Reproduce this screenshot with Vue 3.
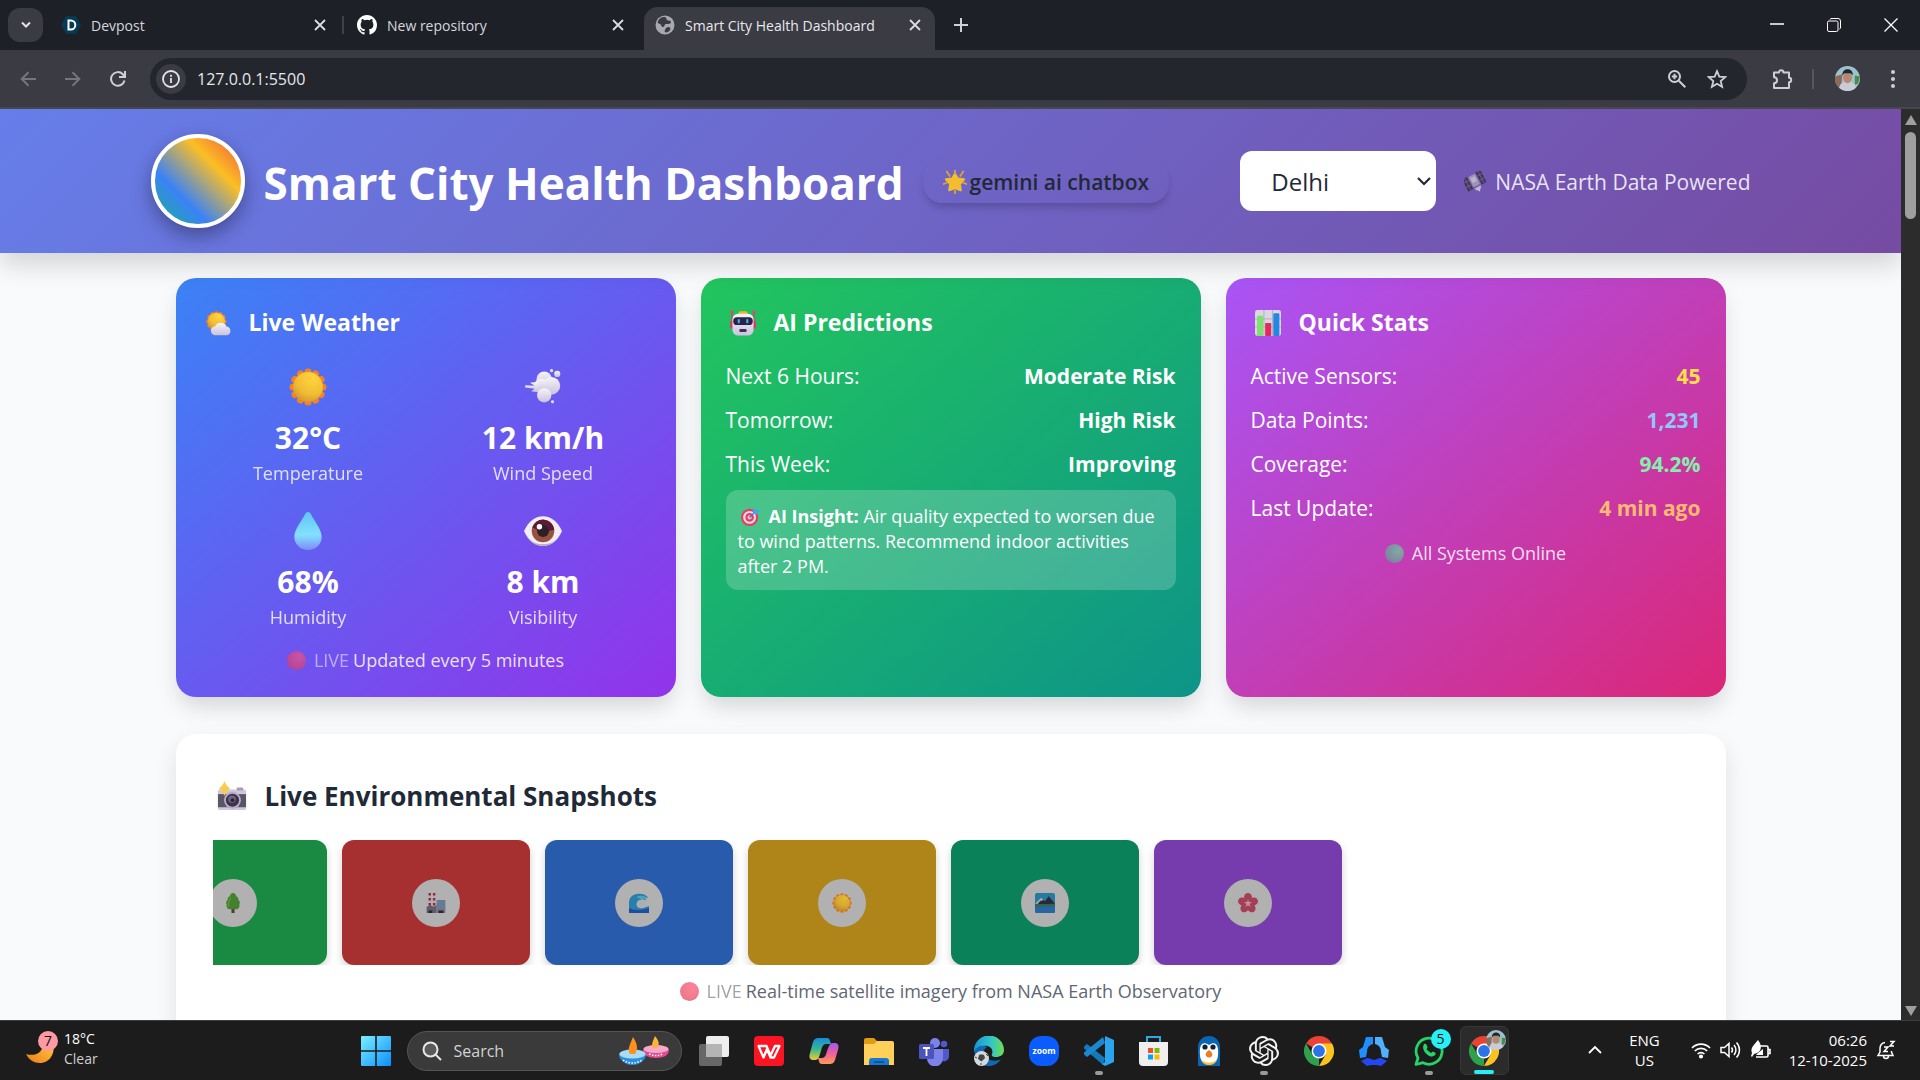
<template>
    <div class="screen">
        <!-- shared drawings -->
        <svg class="sprite" aria-hidden="true">
            <defs>
                <radialGradient id="gSun" cx=".65" cy=".2" r=".9">
                    <stop offset="0" stop-color="#ffd53d" /><stop offset=".6" stop-color="#f1bd34" /><stop offset="1" stop-color="#cf922c" />
                </radialGradient>
                <linearGradient id="gCloud" x1="0" y1="0" x2="0" y2="1">
                    <stop offset="0" stop-color="#f7f4f8" /><stop offset="1" stop-color="#c9c2dc" />
                </linearGradient>
                <linearGradient id="gDrop" x1="0" y1="0" x2="0" y2="1">
                    <stop offset="0" stop-color="#5fc4f5" /><stop offset=".6" stop-color="#83e0ff" /><stop offset="1" stop-color="#7c8cf8" />
                </linearGradient>
                <linearGradient id="gMoon" x1="1" y1="0" x2="0" y2="1">
                    <stop offset="0" stop-color="#ffcf3f" /><stop offset="1" stop-color="#ee7a1c" />
                </linearGradient>
                <linearGradient id="gWin" x1="0" y1="0" x2="1" y2="1">
                    <stop offset="0" stop-color="#7cefff" /><stop offset="1" stop-color="#0a8fff" />
                </linearGradient>
                <linearGradient id="gEdge" x1="0" y1="0" x2="1" y2="0">
                    <stop offset="0" stop-color="#1795d6" /><stop offset=".6" stop-color="#35c6c8" /><stop offset="1" stop-color="#6fe04a" />
                </linearGradient>
                <linearGradient id="gCopA" x1="0" y1="0" x2="0" y2="1">
                    <stop offset="0" stop-color="#1a8be0" /><stop offset=".5" stop-color="#35b98e" /><stop offset="1" stop-color="#f2c93a" />
                </linearGradient>
                <linearGradient id="gCopB" x1="0" y1="0" x2="0" y2="1">
                    <stop offset="0" stop-color="#a05bf0" /><stop offset=".5" stop-color="#ee5f9d" /><stop offset="1" stop-color="#ff9a52" />
                </linearGradient>
            </defs>
            <symbol id="sun" viewBox="0 0 32 32">
                <g fill="#f58220">
                    <circle v-for="a in 12" :key="a" cx="16" cy="3.4" r="3" :transform="`rotate(${a * 30} 16 16)`" />
                </g>
                <circle cx="16" cy="16" r="12.6" fill="url(#gSun)" />
            </symbol>
            <symbol id="suncloud" viewBox="0 0 32 32">
                <g fill="#f58220">
                    <circle v-for="a in 12" :key="a" cx="14" cy="4" r="2.6" :transform="`rotate(${a * 30} 14 14)`" />
                </g>
                <circle cx="14" cy="14" r="10.6" fill="url(#gSun)" />
                <path d="M13 31a5.5 5.5 0 0 1-.5-11 7.5 7.5 0 0 1 7-4.2 7.5 7.5 0 0 1 7 4.4A5.5 5.5 0 0 1 27 31z" fill="url(#gCloud)" />
            </symbol>
            <symbol id="wind" viewBox="0 0 32 32">
                <g fill="url(#gCloud)">
                    <circle cx="17" cy="9.5" r="6.5" /><circle cx="23" cy="15" r="7.5" /><circle cx="14.5" cy="15" r="6" /><circle cx="17" cy="23" r="6" />
                    <path d="M1 14.5 9 15l-4-2.500 7-1v9l-6-1 3-2-8-1z" />
                    <circle cx="28" cy="5" r="2.6" /><circle cx="23.2" cy="2.3" r="1.4" /><circle cx="24" cy="28.5" r="1.4" />
                </g>
            </symbol>
            <symbol id="drop" viewBox="0 0 32 32">
                <path d="M16 0c1 0 2 .7 2.5 1.8C21 7 27.5 14.5 27.5 21a11.5 11 0 0 1-23 0C4.5 14.5 11 7 13.5 1.8 14 .7 15 0 16 0z" fill="url(#gDrop)" />
            </symbol>
            <symbol id="eye" viewBox="0 0 32 32">
                <path d="M0 16C4 7 10 3.5 16 3.5S28 7 32 16C28 25 22 28.5 16 28.5S4 25 0 16z" fill="#f1eef3" />
                <path d="M1 18c4 7 9 9 15 9s11-2 15-9c-4 8-9 10.500-15 10.500S5 26 1 18z" fill="#b9b2c2" />
                <circle cx="16" cy="16" r="9.5" fill="#98513f" />
                <path d="M7 13a9.5 9.5 0 0 1 18.500 2L16 17z" fill="#5b1a35" />
                <circle cx="16" cy="16" r="5" fill="#2a2026" /><circle cx="13" cy="12.5" r="2.3" fill="#fff" />
            </symbol>
            <symbol id="robot" viewBox="0 0 32 32">
                <path d="M2.5 2v18M29.5 2v18" stroke="#dc3a63" stroke-width="1.6" />
                <circle cx="2.5" cy="2.5" r="2" fill="#f0416d" /><circle cx="29.5" cy="2.5" r="2" fill="#f0416d" />
                <rect x="0" y="13" width="6" height="10" rx="2.5" fill="#d93a68" /><rect x="26" y="13" width="6" height="10" rx="2.5" fill="#d93a68" />
                <rect x="10.5" y="1.5" width="11" height="5" rx="2" fill="#f4b32a" />
                <rect x="3" y="4.5" width="26" height="27" rx="7" fill="url(#gCloud)" />
                <rect x="4" y="9" width="24" height="9.5" rx="4.5" fill="#2b2248" />
                <rect x="9.5" y="11" width="2.6" height="5.5" rx="1.3" fill="#3cb4ff" /><rect x="20" y="11" width="2.6" height="5.5" rx="1.3" fill="#3cb4ff" />
                <rect x="11.5" y="23.5" width="9" height="3.6" rx="1.5" fill="#3b2c5c" />
            </symbol>
            <symbol id="chart" viewBox="0 0 32 32">
                <rect width="32" height="32" rx="3" fill="#dcd5e4" />
                <path d="M0 11h32M0 21h32M11 0v32M21.5 0v32" stroke="#b6abc6" stroke-width="1.2" />
                <rect x="2.5" y="7" width="7.5" height="25" rx="1" fill="#7ee36b" /><rect x="12.5" y="16" width="7.5" height="16" rx="1" fill="#e22a5b" /><rect x="22.5" y="4" width="7.5" height="28" rx="1" fill="#2289e0" />
            </symbol>
            <symbol id="target" viewBox="0 0 32 32">
                <circle cx="14.5" cy="17.5" r="14.5" fill="#e43e62" /><circle cx="14.5" cy="17.5" r="10.8" fill="#eedbe6" /><circle cx="14.5" cy="17.5" r="7.2" fill="#e43e62" /><circle cx="14.5" cy="17.5" r="3.6" fill="#d9c3d4" />
                <path d="m14.5 17.5 10-10" stroke="#3d6fb8" stroke-width="2" /><path d="m20 7 4-6 2 4 5 1-4 6-7-1z" fill="#42a5f0" />
            </symbol>
            <symbol id="camera" viewBox="0 0 32 32">
                <rect x="1" y="9" width="30" height="22" rx="2" fill="#cfc7dc" /><rect x="21" y="7" width="7" height="3" rx="1" fill="#a59db3" />
                <rect x="1" y="14" width="30" height="14" fill="#5c5566" />
                <circle cx="16.5" cy="20.5" r="9" fill="#b7adc6" /><circle cx="16.5" cy="20.5" r="7" fill="#3b3347" /><circle cx="16" cy="19.5" r="4" fill="#6f6580" /><circle cx="16.5" cy="20.5" r="2" fill="#2a2333" />
                <path d="M8 0c1.500 4 3 6 6 8-3 2-4.500 4-6 8-1.500-4-3-6-6-8 3-2 4.500-4 6-8z" fill="#fbcb4c" />
            </symbol>
            <symbol id="tree" viewBox="0 0 32 32">
                <rect x="13.5" y="22" width="5" height="10" rx="1" fill="#6b3f3b" />
                <path d="M16 0c3 0 5 3 5 5 3 1 4 4 3.500 6 3 2 3 5 1.500 7 1.500 4-1 8-5 8H11c-4 0-6.500-4-5-8-1.500-2-1.500-5 1.500-7C7 9 8 6 11 5c0-2 2-5 5-5z" fill="#4d9135" />
                <path d="M16 2c-3 2-4 4-3 8-3 3-4 6-3 13-3-1-3-3-2-6-1-2 0-4 2-5 0-3 1-5 3-6 0-2 1-4 3-4z" fill="#6eae3c" />
            </symbol>
            <symbol id="factory" viewBox="0 0 32 32">
                <rect x="4" y="0" width="4" height="21" fill="#c9c4cc" /><rect x="11" y="0" width="4" height="21" fill="#c9c4cc" />
                <path d="M4 0h4v4H4zm0 8h4v4H4zm0 8h4v4H4zM11 0h4v4h-4zm0 8h4v4h-4zm0 8h4v4h-4z" fill="#a82f52" />
                <path d="M1 22l6-3 5 3 5-3v13H1z" fill="#6f6878" /><rect x="17" y="11" width="14" height="21" rx="1" fill="#8a8296" />
                <path d="M19 14h4v3h-4zm6 0h4v3h-4zm-6 6h4v3h-4zm6 0h4v3h-4z" fill="#38a6d8" /><path d="M4 28h6v4H4zm16 0h8v4h-8z" fill="#2f2839" />
            </symbol>
            <symbol id="wave" viewBox="0 0 32 32">
                <path d="M0 32V14C1 5 8 1 17 1c7 0 12 3 14 7l-6-1 3 5-5-2c-7 0-11 4-11 8 0 6 7 8 13 5 3-1 5-2 7-2v11z" fill="#2d8fc4" />
                <path d="M0 32V24c6 2 10 4 17 3 6 0 10-2 15-3v8z" fill="#2557b5" />
                <path d="M12 6c6-3 13-2 17 2l-5 1 2 3-5-2c-4 0-6-2-9-4z" fill="#58b9d4" /><circle cx="19" cy="17" r="6" fill="#c3c6c9" />
            </symbol>
            <symbol id="landscape" viewBox="0 0 32 32">
                <rect width="32" height="32" rx="3" fill="#2a8cb4" /><path d="M0 19 10 7l6 6 6-8 10 12v5H0z" fill="#322c46" /><path d="M0 17 10 7l4 4-6 2-4 5z" fill="#bdbcc4" />
                <path d="M0 17c8 1 22 0 32 0v5H0z" fill="#35774d" /><path d="M0 21h32v8a3 3 0 0 1-3 3H3a3 3 0 0 1-3-3z" fill="#2d73b8" />
            </symbol>
            <symbol id="flower" viewBox="0 0 32 32">
                <g fill="#bb4862">
                    <ellipse v-for="a in 5" :key="a" cx="16" cy="7.5" rx="6.4" ry="7.5" :transform="`rotate(${a * 72} 16 16.5)`" />
                </g>
                <path d="m16 10 1.5 4.500h5l-4 3 1.500 5-4-3-4 3 1.500-5-4-3h5z" fill="#d5a9b4" />
            </symbol>
            <symbol id="glow" viewBox="0 0 32 32">
                <path d="M16 5l3.6 6.500 8.400 1-5.600 6.300 1.200 8L16 24l-7.600 2.800 1.200-8L4 12.500l8.400-1z" fill="#f2bd2f" stroke="#f2bd2f" stroke-width="3" stroke-linejoin="round" />
                <path d="M16 0v5M5 2l4 6M27 2l-4 6M0 19l5-2M32 19l-5-2M16 32v-5" stroke="#dba62f" stroke-width="2.4" stroke-linecap="round" />
            </symbol>
            <symbol id="satellite" viewBox="0 0 32 32">
                <g transform="rotate(-28 16 16)">
                    <rect x="1" y="4" width="8" height="20" fill="#41375a" /><rect x="23" y="4" width="8" height="20" fill="#41375a" />
                    <path d="M1 10h8M1 17h8M23 10h8M23 17h8M5 4v20M27 4v20" stroke="#7b6d95" />
                    <rect x="10.5" y="5" width="11" height="17" rx="2" fill="#9d93ae" /><rect x="12.5" y="8" width="7" height="8" fill="#bcb3c9" />
                    <path d="M11 24a5 5 0 0 0 10 0z" fill="#b9aecb" /><path d="M16 26v5" stroke="#cfc5dc" stroke-width="2" />
                </g>
            </symbol>
            <symbol id="face" viewBox="0 0 24 24">
                <circle cx="12" cy="12" r="12" fill="#9cc3cc" /><path d="M0 10a12 12 0 0 0 6 12l1-14z" fill="#8d6a5e" /><path d="M24 10l-5-1v9l3-1z" fill="#4a8a4c" />
                <path d="M4 21c1-5 4-6 8-6s7 1 8 6a12 12 0 0 1-16 0z" fill="#c9ccd4" /><ellipse cx="12" cy="11" rx="4.2" ry="5.5" fill="#b98670" /><path d="M7 9c0-5 3-6 5-6s5.500 1 5 6l-2-2H9z" fill="#1f2733" />
            </symbol>
            <symbol id="chrome" viewBox="0 0 32 32">
                <path d="M16 16 2.14 8A16 16 0 0 1 29.86 8z" fill="#e94335" /><path d="M2.14 8l7 12 6.900 4L16 32A16 16 0 0 1 2.14 8z" fill="#2da14c" />
                <path d="M16 8h13.86A16 16 0 0 1 16 32l7-12z" fill="#fcc31e" /><circle cx="16" cy="16" r="8" fill="#fff" /><circle cx="16" cy="16" r="6.3" fill="#2b73e8" />
            </symbol>
        </svg>

        <div class="tabstrip">
            <button class="tab-search" aria-label="Search tabs">
                <svg width="12" height="8" viewBox="0 0 12 8"><path d="m2 1.500 4 4 4-4" fill="none" stroke="#e3e4e8" stroke-width="2" /></svg>
            </button>
            <div v-for="tab in tabs" :key="tab.name" class="tab" :class="{ active: tab.active, first: tab.icon === 'devpost' }">
                <svg v-if="tab.icon === 'devpost'" class="favicon" viewBox="0 0 20 20">
                    <path d="M5 1h10l5 9-5 9H5l-5-9z" fill="#053a52" /><path d="M7.500 5.500h2.300a4.500 4.500 0 0 1 0 9H7.500z" fill="none" stroke="#fff" stroke-width="2" />
                </svg>
                <svg v-else-if="tab.icon === 'github'" class="favicon" viewBox="0 0 16 16">
                    <path fill="#fff" d="M8 0C3.580 0 0 3.580 0 8c0 3.540 2.290 6.530 5.470 7.590.4.070.55-.17.55-.38 0-.19-.01-.82-.01-1.490-2.010.37-2.530-.49-2.690-.94-.09-.23-.48-.94-.82-1.130-.28-.15-.68-.52-.01-.53.63-.01 1.080.58 1.230.82.72 1.210 1.870.87 2.330.66.070-.52.28-.87.51-1.070-1.780-.2-3.640-.89-3.640-3.950 0-.87.31-1.590.82-2.150-.08-.2-.36-1.020.08-2.120 0 0 .67-.21 2.200.82a7.600 7.600 0 0 1 4 0c1.530-1.040 2.200-.82 2.200-.82.44 1.100.16 1.920.08 2.120.51.56.82 1.270.82 2.150 0 3.070-1.870 3.750-3.650 3.950.29.25.54.73.54 1.480 0 1.070-.01 1.930-.01 2.200 0 .21.15.46.55.38A8 8 0 0 0 16 8c0-4.420-3.580-8-8-8z" />
                </svg>
                <svg v-else class="favicon" viewBox="0 0 20 20">
                    <circle cx="10" cy="10" r="9.5" fill="#a6a9b1" /><path d="M9 2c3 0 2 2 3 3s4 0 4 2-3 2-5 2-1 3-3 3-1-2-3-3-3-1-2-3 3-4 6-4zM13 12c2 0 3 1 2 3s-4 3-5 2 1-5 3-5z" fill="#3a3b43" />
                </svg>
                <span class="tab-name">{{ tab.name }}</span>
                <button class="tab-close" :aria-label="'Close ' + tab.name">
                    <svg width="12" height="12" viewBox="0 0 12 12"><path d="m1 1 10 10M11 1 1 11" stroke="#dcdde2" stroke-width="1.8" /></svg>
                </button>
            </div>
            <button class="tab-new" aria-label="New tab">
                <svg width="14" height="14" viewBox="0 0 14 14"><path d="M7 0v14M0 7h14" stroke="#cfd1d8" stroke-width="2" /></svg>
            </button>
            <div class="window-controls">
                <button aria-label="Minimize"><svg width="14" height="14" viewBox="0 0 14 14"><path d="M0 6h14" stroke="#fff" stroke-width="1.5" /></svg></button>
                <button aria-label="Restore"><svg width="14" height="14" viewBox="0 0 14 14" fill="none" stroke="#fff"><rect x=".5" y="3" width="10.5" height="10.5" rx="1.5" /><path d="M3 1.500A1.500 1.500 0 0 1 4 .5h7a2.500 2.500 0 0 1 2.500 2.500v7a1.500 1.500 0 0 1-1 1" /></svg></button>
                <button aria-label="Close"><svg width="14" height="14" viewBox="0 0 14 14"><path d="m.5.5 13 13m0-13-13 13" stroke="#fff" stroke-width="1.3" /></svg></button>
            </div>
        </div>

        <div class="toolbar">
            <button class="tool" aria-label="Back"><svg width="16" height="16" viewBox="0 0 16 16" fill="none" stroke="#74767e" stroke-width="2"><path d="M16 8H2M8.500 1.200 1.700 8l6.800 6.800" /></svg></button>
            <button class="tool" aria-label="Forward"><svg width="16" height="16" viewBox="0 0 16 16" fill="none" stroke="#74767e" stroke-width="2"><path d="M0 8h14M7.500 1.200 14.300 8l-6.800 6.800" /></svg></button>
            <button class="tool" aria-label="Reload"><svg width="16" height="16" viewBox="0 0 16 16" fill="none" stroke="#cdcfd6" stroke-width="2"><path d="M14.500 9.500A6.800 6.800 0 1 1 12.800 3.200L15 5.500M15 0v6H9" /></svg></button>
            <div class="omnibox">
                <button class="site-info" aria-label="Site information"><svg width="18" height="18" viewBox="0 0 18 18"><circle cx="9" cy="9" r="8" fill="none" stroke="#e3e4e8" stroke-width="1.8" /><path d="M9 8v5M9 4.700v2" stroke="#e3e4e8" stroke-width="1.8" /></svg></button>
                <input class="url" type="text" aria-label="Address" v-model="url" />
                <button class="tool small" aria-label="Zoom"><svg width="20" height="20" viewBox="0 0 20 20" fill="none" stroke="#cdcfd6" stroke-width="2"><circle cx="7.5" cy="7.5" r="5.5" /><path d="m11.800 11.800 6.500 6.500M7.500 4.800v5.400M4.800 7.500h5.400" /></svg></button>
                <button class="tool small" aria-label="Bookmark"><svg width="20" height="20" viewBox="0 0 20 20" fill="none" stroke="#cdcfd6" stroke-width="1.8"><path d="m10 2.200 2.300 5.400 5.900.5-4.500 3.900 1.400 5.800-5.100-3.100-5.100 3.100L6.300 12 1.800 8.100l5.900-.5z" /></svg></button>
            </div>
            <button class="tool" aria-label="Extensions"><svg width="22" height="22" viewBox="0 0 22 22" fill="none" stroke="#cdcfd6" stroke-width="2"><path d="M3 4.500h5a2.200 2.200 0 0 1 4.400 0H18v5.300a2.200 2.200 0 0 1 0 4.400V20H3v-4.800a3 3 0 0 0 0-6z" stroke-linejoin="round" /></svg></button>
            <span class="divider"></span>
            <button class="tool profile" aria-label="Profile"><svg width="25" height="25"><use href="#face" /></svg></button>
            <button class="tool menu" aria-label="Menu"><svg width="4" height="18" viewBox="0 0 4 18" fill="#cdcfd6"><circle cx="2" cy="2" r="2" /><circle cx="2" cy="9" r="2" /><circle cx="2" cy="16" r="2" /></svg></button>
        </div>

        <div class="viewport">
            <div class="page">
                <header class="header">
                    <div class="header-inner">
                        <div class="logo"></div>
                        <h1>Smart City Health Dashboard</h1>
                        <button class="chat-button"><svg width="24" height="24"><use href="#glow" /></svg>gemini ai chatbox</button>
                        <div class="header-right">
                            <div class="city-box">
                                <select v-model="city" class="city" aria-label="City">
                                    <option v-for="c in cities" :key="c">{{ c }}</option>
                                </select>
                                <svg class="city-arrow" width="14" height="10" viewBox="0 0 14 10"><path d="m1 2 6 6 6-6" fill="none" stroke="#1f2937" stroke-width="2.2" /></svg>
                            </div>
                            <span class="powered"><svg width="22" height="22"><use href="#satellite" /></svg>NASA Earth Data Powered</span>
                        </div>
                    </div>
                </header>

                <main class="main">
                    <div class="cards">
                        <section class="card weather">
                            <h2><svg width="26" height="26"><use href="#suncloud" /></svg>Live Weather</h2>
                            <div class="weather-grid">
                                <div v-for="w in weather" :key="w.label" class="weather-item">
                                    <div class="weather-icon"><svg width="38" height="38"><use :href="'#' + w.icon" /></svg></div>
                                    <div class="weather-value">{{ w.value }}</div>
                                    <div class="weather-label">{{ w.label }}</div>
                                </div>
                            </div>
                            <p class="note live"><i class="dot red"></i><span class="pulse">LIVE</span> Updated every 5 minutes</p>
                        </section>

                        <section class="card predictions">
                            <h2><svg width="26" height="26"><use href="#robot" /></svg>AI Predictions</h2>
                            <div class="rows">
                                <div v-for="p in predictions" :key="p.label" class="row"><span>{{ p.label }}</span><strong>{{ p.value }}</strong></div>
                            </div>
                            <p class="insight"><svg width="19" height="19"><use href="#target" /></svg><strong>AI Insight:</strong> Air quality expected to worsen due to wind patterns. Recommend indoor activities after 2 PM.</p>
                        </section>

                        <section class="card stats">
                            <h2><svg width="26" height="26"><use href="#chart" /></svg>Quick Stats</h2>
                            <div class="rows">
                                <div v-for="s in stats" :key="s.label" class="row"><span>{{ s.label }}</span><strong :class="s.color">{{ s.value }}</strong></div>
                            </div>
                            <p class="note online"><i class="dot green"></i>All Systems Online</p>
                        </section>
                    </div>

                    <section class="snapshots">
                        <h2><svg width="30" height="30"><use href="#camera" /></svg>Live Environmental Snapshots</h2>
                        <div class="strip">
                            <div class="track">
                                <div v-for="s in snapshots" :key="s.icon" class="snap" :class="s.color">
                                    <span class="badge"><svg width="20" height="20"><use :href="'#' + s.icon" /></svg></span>
                                </div>
                            </div>
                        </div>
                        <p class="note caption"><i class="dot pink"></i><span class="pulse">LIVE</span> Real-time satellite imagery from NASA Earth Observatory</p>
                    </section>
                </main>
            </div>
            <div class="scrollbar">
                <svg width="12" height="10" viewBox="0 0 12 10"><path d="M6 0 12 10H0z" fill="#9f9f9f" /></svg>
                <div class="thumb"></div>
                <svg width="12" height="10" viewBox="0 0 12 10"><path d="M6 10 12 0H0z" fill="#9f9f9f" /></svg>
            </div>
        </div>

        <footer class="taskbar">
            <div class="widget">
                <svg width="36" height="38" viewBox="0 0 36 38">
                    <path d="M27 11c3 12-3 22-13 22-6 0-11-3-14-9 10 3 18-2 17-12z" fill="url(#gMoon)" /><circle cx="22" cy="11" r="10" fill="#ff99a4" />
                    <text x="22" y="16" text-anchor="middle" font-size="14" fill="#111">7</text>
                </svg>
                <div>18°C<br /><span class="dim">Clear</span></div>
            </div>
            <div class="apps">
                <button class="start" aria-label="Start"><svg width="30" height="30" viewBox="0 0 30 30"><path d="M1 0h13.200v14.200H0V1a1 1 0 0 1 1-1zM15.800 0H29a1 1 0 0 1 1 1v13.200H15.800zM0 15.800h14.200V30H1a1 1 0 0 1-1-1zM15.800 15.800H30V29a1 1 0 0 1-1 1H15.800z" fill="url(#gWin)" /></svg></button>
                <label class="search">
                    <svg width="20" height="20" viewBox="0 0 20 20" fill="none" stroke="#e8e8e8" stroke-width="2"><circle cx="8.5" cy="8.5" r="7" fill="#5a5a5a" /><path d="m13.500 13.500 5.500 5.500" /></svg>
                    <input type="text" placeholder="Search" aria-label="Search" />
                    <svg width="50" height="30" viewBox="0 0 50 30">
                        <path d="M24 14c0 5 5 8 13 8s13-3 13-8l-2-2H26z" fill="#e34a93" /><ellipse cx="37" cy="13" rx="12.5" ry="4" fill="#f7a9c7" /><path d="M36 0c4 5 5 8 2 12h-4c-2-4 0-7 2-12z" fill="#ffb13c" />
                        <path d="M0 18c0 6 6 11 13.500 11S27 24 27 18l-2-2H2z" fill="#2b8fdc" /><ellipse cx="13.5" cy="18" rx="13" ry="4.5" fill="#a8dcf2" /><path d="M14 1c5 8 5 12 2 17h-5c-3-5 0-9 3-17z" fill="#ff8f1f" />
                        <path d="M4 24c6 4 13 4 19 0M30 18c5 2 9 2 14 0" fill="none" stroke="#fff" stroke-width="1.5" stroke-dasharray="1.5 1.5" />
                    </svg>
                </label>
                <button v-for="app in apps" :key="app.id" class="app" :class="{ current: app.current }" :aria-label="app.id">
                    <svg v-if="app.id === 'Task view'" class="app-icon" viewBox="0 0 30 30"><rect x="7" width="23" height="21" rx="2" fill="#eee" /><rect y="8" width="23" height="22" rx="2" fill="#7a7a7a" opacity=".8" /><path d="M7 8h16v13H7z" fill="#b5b5b5" /></svg>
                    <svg v-else-if="app.id === 'WPS'" class="app-icon" viewBox="0 0 30 30"><rect width="30" height="30" rx="4" fill="#fb1422" /><path d="M4.500 10h8l4 9.500L21 10h4.500l-5.500 11.500h-3.500L13 13l-3.500 8.500z" fill="none" stroke="#fff" stroke-width="2.3" stroke-linejoin="round" /></svg>
                    <svg v-else-if="app.id === 'Copilot'" class="app-icon" viewBox="0 0 30 30"><path d="M9 2h9c3 0 3 3 4 6h-5c-3 0-4 3-5 7l-2 6c-1 2-2 3-4 3H4c-4 0-4-4-3-7L4 6c1-3 3-4 5-4z" fill="url(#gCopA)" /><path d="M21 28h-8c-3 0-3-3-4-6h4c3 0 4-3 5-7l2-5c1-2 2-3 4-3h2c4 0 4 4 3 7l-3 10c-1 3-3 4-5 4z" fill="url(#gCopB)" /></svg>
                    <svg v-else-if="app.id === 'Explorer'" class="app-icon" viewBox="0 0 30 30"><path d="M0 4a2 2 0 0 1 2-2h8l3 3h15v8H0z" fill="#e19b16" /><path d="M0 8h10l3-3h15a2 2 0 0 1 2 2v22H0z" fill="#ffd05a" /><path d="M5 29v-4a3 3 0 0 1 3-3h14a3 3 0 0 1 3 3v4z" fill="#1479cf" /><path d="M10 26h10" stroke="#0a4a88" stroke-width="1.5" /></svg>
                    <svg v-else-if="app.id === 'Teams'" class="app-icon" viewBox="0 0 30 30"><circle cx="16" cy="7" r="5" fill="#7b83eb" /><circle cx="25" cy="8" r="3.3" fill="#5059c9" /><path d="M22 13h8v8a5 5 0 0 1-7 4z" fill="#5059c9" /><path d="M8 13h16v9a8 8 0 0 1-16 1z" fill="#7b83eb" /><rect y="8" width="15" height="15" rx="1.5" fill="#4b53bc" /><path d="M4 12h7M7.500 12v8" stroke="#fff" stroke-width="1.8" /></svg>
                    <svg v-else-if="app.id === 'Edge'" class="app-icon" viewBox="0 0 30 30"><path d="M0 15a15 15 0 0 1 30-1c0 5-4 7-8 7-3 0-5-1-4-3 2-5-3-9-8-8-5 0-9 3-10 7z" fill="url(#gEdge)" /><path d="M1 14c4-5 9-5 12-3-5 3-5 11 3 13 4 1 8 1 11-1-4 7-13 9-20 5C2 25 0 20 1 14z" fill="#1068b0" /><circle cx="7.5" cy="22.5" r="7.5" fill="#d5d8dc" /><path d="M5.500 19h4l1 3-3 3-3-2zM1 21l2 1M12 18l2 2M7 27v2" stroke="#444" fill="#444" /></svg>
                    <svg v-else-if="app.id === 'Zoom'" class="app-icon" viewBox="0 0 30 30"><rect width="30" height="30" rx="12" fill="#0b5cff" /><text x="15" y="17.5" text-anchor="middle" font-size="8.5" font-weight="700" fill="#fff">zoom</text></svg>
                    <svg v-else-if="app.id === 'VS Code'" class="app-icon" viewBox="0 0 30 30"><path d="M21 22 3 8 0 10.500v2L19 29z" fill="#1279bd" /><path d="M21 7 3 21 0 18.500v-2L19 1z" fill="#1a87cf" /><path d="M21 0 30 4v22l-9 4-3-2 3-2z" fill="#2ba4f0" /></svg>
                    <svg v-else-if="app.id === 'Store'" class="app-icon" viewBox="0 0 30 30"><path d="M8 7V1h13v6" fill="none" stroke="#2fa8e0" stroke-width="2" /><path d="M0 6h29v20a4 4 0 0 1-4 4H4a4 4 0 0 1-4-4z" fill="#efefef" /><path d="M9 12h5v5H9z" fill="#f25022" /><path d="M15.500 12h5v5h-5z" fill="#7fba00" /><path d="M9 18.500h5v5H9z" fill="#00a4ef" /><path d="M15.500 18.500h5v5h-5z" fill="#ffb900" /></svg>
                    <svg v-else-if="app.id === 'Penguin'" class="app-icon" viewBox="0 0 30 30"><path d="M4 30V11a11 11 0 0 1 22 0v19z" fill="#0a66b2" /><path d="M6 19C5 8 9 5 15 9c6-4 10-1 9 10 0 12-18 12-18 0z" fill="#fff" /><path d="M7 23c3 5 13 5 16 0-1 8-15 8-16 0z" fill="#fbc02d" /><circle cx="11" cy="11" r="2.6" fill="#16202e" /><circle cx="19" cy="11" r="2.6" fill="#16202e" /><path d="M15 14c3 2 4 4 3 6-2 2-4 2-6 0-1-2 0-4 3-6z" fill="#ef7d1d" /></svg>
                    <svg v-else-if="app.id === 'ChatGPT'" class="app-icon" viewBox="0 0 24 24"><path fill="#f2f2f2" d="M22.2819 9.8211a5.9847 5.9847 0 0 0-.5157-4.9108 6.0462 6.0462 0 0 0-6.5098-2.9A6.0651 6.0651 0 0 0 4.9807 4.1818a5.9847 5.9847 0 0 0-3.9977 2.9 6.0462 6.0462 0 0 0 .7427 7.0966 5.98 5.98 0 0 0 .511 4.9107 6.051 6.051 0 0 0 6.5146 2.9001A5.9847 5.9847 0 0 0 13.2599 24a6.0557 6.0557 0 0 0 5.7718-4.2058 5.9894 5.9894 0 0 0 3.9977-2.9001 6.0557 6.0557 0 0 0-.7475-7.0729zm-9.022 12.6081a4.4755 4.4755 0 0 1-2.8764-1.0408l.1419-.0804 4.7783-2.7582a.7948.7948 0 0 0 .3927-.6813v-6.7369l2.02 1.1686a.071.071 0 0 1 .038.052v5.5826a4.504 4.504 0 0 1-4.4945 4.4944zm-9.6607-4.1254a4.4708 4.4708 0 0 1-.5346-3.0137l.142.0852 4.783 2.7582a.7712.7712 0 0 0 .7806 0l5.8428-3.3685v2.3324a.0804.0804 0 0 1-.0332.0615L9.74 19.9502a4.4992 4.4992 0 0 1-6.1408-1.6464zM2.3408 7.8956a4.485 4.485 0 0 1 2.3655-1.9728V11.6a.7664.7664 0 0 0 .3879.6765l5.8144 3.3543-2.0201 1.1685a.0757.0757 0 0 1-.071 0l-4.8303-2.7865A4.504 4.504 0 0 1 2.3408 7.872zm16.5963 3.8558L13.1038 8.364 15.1192 7.2a.0757.0757 0 0 1 .071 0l4.8303 2.7913a4.4944 4.4944 0 0 1-.6765 8.1042v-5.6772a.79.79 0 0 0-.407-.667zm2.0107-3.0231l-.142-.0852-4.7735-2.7818a.7759.7759 0 0 0-.7854 0L9.409 9.2297V6.8974a.0662.0662 0 0 1 .0284-.0615l4.8303-2.7866a4.4992 4.4992 0 0 1 6.6802 4.66zM8.3065 12.863l-2.02-1.1638a.0804.0804 0 0 1-.038-.0567V6.0742a4.4992 4.4992 0 0 1 7.3757-3.4537l-.142.0805L8.704 5.459a.7948.7948 0 0 0-.3927.6813zm1.0976-2.3654l2.602-1.4998 2.6069 1.4998v2.9994l-2.5974 1.4997-2.6067-1.4997Z" /></svg>
                    <svg v-else-if="app.id === 'Chrome'" class="app-icon"><use href="#chrome" /></svg>
                    <svg v-else-if="app.id === 'Hub'" class="app-icon" viewBox="0 0 30 30"><path d="M7 1h7v7a7.500 7.500 0 0 0-6 8l-1 5-6 1-1-8 4-3z" fill="#1f8fff" /><path d="M23 1h-7v7a7.500 7.500 0 0 1 6 8l1 5 6 1 1-8-4-3z" fill="#4fb0ff" /><path d="m2 25 6-3 3 .5a7 7 0 0 0 8 0l3-.5 6 3-6 5-4-1h-6l-4 1z" fill="#2447f5" /></svg>
                    <svg v-else-if="app.id === 'WhatsApp'" class="app-icon" viewBox="0 0 30 30"><path d="M2 28.500 4 22A13 13 0 1 1 9 26.700z" fill="none" stroke="#25d366" stroke-width="2.8" stroke-linejoin="round" /><path d="M10 8c2-1 3 1 3.500 3.500-1.500 2-1 2 3.500 5.500 2-1.500 2-2 4.500 0 1 2-3 4-5 3.500C12 19 7 13 10 8z" fill="#25d366" /></svg>
                    <svg v-else class="app-icon"><use href="#chrome" /></svg>
                    <span v-if="app.count" class="count">{{ app.count }}</span>
                    <svg v-if="app.current" class="app-face" width="20" height="20"><use href="#face" /></svg>
                    <i v-if="app.running" class="running"></i>
                </button>
            </div>
            <div class="tray">
                <svg width="14" height="9" viewBox="0 0 14 9"><path d="m1 8 6-6 6 6" fill="none" stroke="#fff" stroke-width="1.8" /></svg>
                <div class="lang">ENG<br />US</div>
                <div class="status">
                    <svg width="20" height="18" viewBox="0 0 20 18" fill="none" stroke="#fff" stroke-width="1.6"><path d="M1 7a12.500 12.500 0 0 1 18 0M3.800 10a8.700 8.700 0 0 1 12.400 0M6.600 13a4.800 4.800 0 0 1 6.800 0" /><circle cx="10" cy="15.5" r="1.3" fill="#fff" /></svg>
                    <svg width="21" height="18" viewBox="0 0 21 18" fill="none" stroke="#fff" stroke-width="1.5"><path d="M1 6.500h3.500L9 2.500v13l-4.500-4H1zM11.500 6.500a4 4 0 0 1 0 5M14 4a7.500 7.500 0 0 1 0 10M16.500 1.500a11 11 0 0 1 0 15" /></svg>
                    <svg width="21" height="20" viewBox="0 0 21 20"><path d="M9 6h7.500a1.500 1.500 0 0 1 1.500 1.500v8a1.500 1.500 0 0 1-1.500 1.500H6M18.500 9.500h1.500v4h-1.500" fill="none" stroke="#fff" stroke-width="1.6" /><path d="M8 0c4 5 4 11-1 13l-3 1-2 3-1-1 1-3C0 8 4 5 8 0zM8 13l5-4v6H6z" fill="#fff" /></svg>
                </div>
                <div class="clock">06:26<br />12-10-2025</div>
                <svg width="20" height="20" viewBox="0 0 20 20" fill="none" stroke="#fff" stroke-width="1.5"><path d="M9 2.500c-3 .5-5 3-5 6V12l-2 3.500h15L15.500 12v-1M7.500 16a2.500 2.500 0 0 0 5 0M8 7h4l-4 4.500h4M14 1.500h4l-4 4.500h4" /></svg>
            </div>
        </footer>
    </div>
</template>

<script setup>

import { ref } from 'vue';

const url = ref('127.0.0.1:5500');
const city = ref('Delhi');
const cities = ['Delhi'];

const tabs = [
    { name: 'Devpost', icon: 'devpost' },
    { name: 'New repository', icon: 'github' },
    { name: 'Smart City Health Dashboard', icon: 'globe', active: true },
];

const weather = [
    { icon: 'sun', value: '32°C', label: 'Temperature' },
    { icon: 'wind', value: '12 km/h', label: 'Wind Speed' },
    { icon: 'drop', value: '68%', label: 'Humidity' },
    { icon: 'eye', value: '8 km', label: 'Visibility' },
];

const predictions = [
    { label: 'Next 6 Hours:', value: 'Moderate Risk' },
    { label: 'Tomorrow:', value: 'High Risk' },
    { label: 'This Week:', value: 'Improving' },
];

const stats = [
    { label: 'Active Sensors:', value: '45', color: 'yellow' },
    { label: 'Data Points:', value: '1,231', color: 'blue' },
    { label: 'Coverage:', value: '94.2%', color: 'mint' },
    { label: 'Last Update:', value: '4 min ago', color: 'orange' },
];

const snapshots = [
    { icon: 'tree', color: 'forest' },
    { icon: 'factory', color: 'industry' },
    { icon: 'wave', color: 'ocean' },
    { icon: 'sun', color: 'desert' },
    { icon: 'landscape', color: 'park' },
    { icon: 'flower', color: 'garden' },
];

const apps = [
    { id: 'Task view' },
    { id: 'WPS' },
    { id: 'Copilot' },
    { id: 'Explorer' },
    { id: 'Teams' },
    { id: 'Edge' },
    { id: 'Zoom' },
    { id: 'VS Code', running: true },
    { id: 'Store' },
    { id: 'Penguin' },
    { id: 'ChatGPT', running: true },
    { id: 'Chrome' },
    { id: 'Hub' },
    { id: 'WhatsApp', running: true, count: 5 },
    { id: 'Chrome profile', running: true, current: true },
];
</script>

<style>
body {
    margin: 0;
    background: #1c1c1c;
}
</style>

<style scoped>
* {
    box-sizing: border-box;
}

.screen {
    display: flex;
    flex-direction: column;
    height: 100vh;
    overflow: hidden;
    font-family: "Segoe UI", "Open Sans", "Noto Sans", sans-serif;
    font-size: 18px;
}

.sprite {
    position: absolute;
    width: 0;
    height: 0;
}

button {
    display: flex;
    align-items: center;
    justify-content: center;
    padding: 0;
    border: none;
    background: none;
    font: inherit;
    cursor: pointer;
}

svg {
    flex: none;
}

h1,
h2,
p {
    margin: 0;
}

/* browser tabs */
.tabstrip {
    display: flex;
    align-items: center;
    height: 50px;
    flex: none;
    padding-left: 8px;
    background: #1d2027;
    color: #d5d7dd;
    font-size: 14px;
}

.tab-search {
    width: 35px;
    height: 34px;
    border-radius: 12px;
    background: #3a3b43;
}

.tab {
    display: flex;
    align-items: center;
    gap: 10px;
    width: 300px;
    height: 43px;
    margin-top: 7px;
    padding: 0 20px 7px 13px;
}

.tab.first {
    width: 301px;
    padding-left: 18px;
    padding-right: 18px;
    background: linear-gradient(#3f4149, #3f4149) right 0 top 9px / 2px 18px no-repeat;
}

.tab.active {
    width: 291px;
    padding-left: 11px;
    padding-right: 14px;
    border-radius: 14px 14px 0 0;
    background: #3a3b43;
    color: #e8e9ed;
}

.favicon {
    width: 20px;
    height: 20px;
}

.tab-name {
    flex: 1;
    white-space: nowrap;
}

.tab-new {
    width: 52px;
    height: 40px;
}

.window-controls {
    display: flex;
    margin-left: auto;
    padding-right: 1px;
}

.window-controls button {
    width: 57px;
    height: 50px;
}

.toolbar {
    display: flex;
    align-items: center;
    height: 59px;
    flex: none;
    padding: 0 13px 0 5px;
    border-bottom: 2px solid #46474f;
    background: #3a3b43;
}

.tool {
    width: 45px;
    height: 42px;
}

.tool.small {
    width: 40px;
}

.omnibox {
    display: flex;
    align-items: center;
    flex: 1;
    height: 42px;
    margin: 0 12px 0 10px;
    padding: 0 10px 0 6px;
    border-radius: 21px;
    background: #24262d;
}

.site-info {
    width: 30px;
    height: 30px;
    border-radius: 50%;
    background: #3a3b43;
}

.url {
    flex: 1;
    padding: 0 11px;
    border: none;
    background: none;
    color: #e6e7eb;
    font: inherit;
    font-size: 16px;
    outline: none;
}

.divider {
    width: 2px;
    height: 20px;
    margin: 0 9px 0 8px;
    background: #55565e;
}

.tool.profile {
    width: 48px;
}

.tool.menu {
    width: 28px;
    margin-left: 8px;
}

/* page */
.viewport {
    display: flex;
    flex: 1;
    min-height: 0;
}

.page {
    flex: 1;
    overflow: hidden;
    background: #f9fafb;
}

.scrollbar {
    display: flex;
    flex-direction: column;
    align-items: center;
    width: 19px;
    padding: 6px 0 4px;
    background: #2c2c2c;
}

.thumb {
    width: 11px;
    height: 87px;
    margin: 7px 0 auto;
    border-radius: 6px;
    background: #9f9f9f;
}

.header {
    position: relative;
    padding: 25px;
    background: linear-gradient(135deg, #667eea 0%, #764ba2 100%);
    box-shadow: 0 12px 24px rgba(0, 0, 0, 0.15);
}

.header-inner {
    display: flex;
    align-items: center;
    gap: 19px;
    max-width: 1600px;
    margin: 0 auto;
}

.logo {
    width: 94px;
    height: 94px;
    flex: none;
    border: 4px solid #fff;
    border-radius: 50%;
    background: linear-gradient(45deg, #10b981, #3b82f6 33%, #fbbf24 67%, #ef4444) border-box;
    box-shadow: 0 8px 20px rgba(0, 0, 0, 0.35);
}

h1 {
    padding-top: 4px;
    color: #fff;
    font-size: 44px;
    line-height: 50px;
    white-space: nowrap;
}

.chat-button {
    gap: 3px;
    height: 44px;
    padding: 2px 20px 0;
    border-radius: 20px;
    box-shadow: 0 6px 8px -2px rgba(0, 0, 0, 0.2);
    color: #1f2937;
    font-size: 21px;
    font-weight: 600;
    white-space: nowrap;
}

.header-right {
    display: flex;
    align-items: center;
    gap: 28px;
    margin-left: auto;
}

.city-box {
    position: relative;
    width: 196px;
}

.city {
    width: 100%;
    height: 60px;
    padding: 0 40px 0 31px;
    border: none;
    border-radius: 12px;
    background-color: #fff;
    color: #1f2937;
    font: inherit;
    font-size: 24px;
    font-weight: 500;
    appearance: none;
}

.city-arrow {
    position: absolute;
    top: 25px;
    right: 5px;
    pointer-events: none;
}

.powered {
    display: flex;
    align-items: center;
    gap: 9px;
    padding-top: 2px;
    color: rgba(255, 255, 255, 0.85);
    font-size: 21px;
    white-space: nowrap;
}

.main {
    max-width: 1600px;
    margin: 0 auto;
    padding: 25px;
}

.cards {
    display: grid;
    grid-template-columns: repeat(3, 1fr);
    gap: 25px;
}

.card {
    padding: 26px 25px 24px;
    border-radius: 20px;
    color: #fff;
    box-shadow: 0 12px 22px -3px rgba(0, 0, 0, 0.15);
}

.weather {
    background: linear-gradient(to bottom right, #3b82f6, #9333ea);
}

.predictions {
    background: linear-gradient(to bottom right, #22c55e, #0d9488);
}

.stats {
    background: linear-gradient(to bottom right, #a855f7, #db2777);
}

.card h2 {
    display: flex;
    align-items: center;
    gap: 18px;
    margin-bottom: 18px;
    padding-left: 4px;
    font-size: 23px;
    line-height: 37px;
}

.weather-grid {
    display: grid;
    grid-template-columns: 1fr 1fr;
    gap: 18px 20px;
    text-align: center;
}

.weather-icon {
    display: flex;
    align-items: center;
    justify-content: center;
    height: 56px;
}

.weather-value {
    font-size: 30px;
    font-weight: 700;
    line-height: 46px;
}

.weather-label {
    line-height: 24px;
    opacity: 0.8;
}

.note {
    display: flex;
    align-items: center;
    justify-content: center;
    gap: 4px;
    line-height: 25px;
    white-space: nowrap;
}

.live {
    margin-top: 19px;
    color: rgba(255, 255, 255, 0.85);
}

.pulse {
    opacity: 0.6;
}

.dot {
    width: 19px;
    height: 19px;
    margin-right: 4px;
    border-radius: 50%;
}

.dot.red {
    background: radial-gradient(circle at 65% 30%, #c954a8, #b13f8d);
}

.dot.green {
    background: radial-gradient(circle at 70% 35%, #83a9a4, #7d77a0);
}

.dot.pink {
    background: radial-gradient(circle at 65% 30%, #ff8498, #e37388);
}

.rows {
    display: flex;
    flex-direction: column;
    gap: 10px;
}

.row {
    display: flex;
    justify-content: space-between;
    font-size: 21px;
    line-height: 34px;
}

.yellow {
    color: #fde047;
}

.blue {
    color: #93c5fd;
}

.mint {
    color: #86efac;
}

.orange {
    color: #fdba74;
}

.insight {
    margin-top: 9px;
    padding: 14px 12px 11px;
    border-radius: 12px;
    background: rgba(255, 255, 255, 0.2);
    line-height: 25px;
}

.insight svg {
    margin: 0 9px 0 3px;
    vertical-align: -3px;
}

.online {
    margin-top: 16px;
    color: rgba(255, 255, 255, 0.85);
}

.snapshots {
    margin-top: 37px;
    padding: 37px 37px 60px;
    border-radius: 20px;
    background: #fff;
    box-shadow: 0 10px 22px rgba(0, 0, 0, 0.1);
}

.snapshots h2 {
    display: flex;
    align-items: center;
    gap: 18px;
    margin-bottom: 19px;
    padding-left: 4px;
    color: #1f2937;
    font-size: 26px;
    line-height: 50px;
}

.strip {
    overflow: hidden;
}

.track {
    display: flex;
    gap: 15px;
    margin-left: -74px;
}

.snap {
    display: flex;
    align-items: center;
    justify-content: center;
    width: 188px;
    height: 125px;
    flex: none;
    border-radius: 12px;
    box-shadow: 0 4px 8px rgba(0, 0, 0, 0.18);
}

.forest {
    background: #1a8a42;
}

.industry {
    background: #a63030;
}

.ocean {
    background: #295bac;
}

.desert {
    background: #af8418;
}

.park {
    background: #0b815a;
}

.garden {
    background: #763bac;
}

.badge {
    display: flex;
    align-items: center;
    justify-content: center;
    width: 48px;
    height: 48px;
    border-radius: 50%;
    background: #b1b1b1;
}

.badge svg {
    filter: brightness(0.88);
}

.caption {
    margin-top: 14px;
    color: #5f6773;
}

/* taskbar */
.taskbar {
    display: grid;
    grid-template-columns: 1fr auto 1fr;
    align-items: center;
    height: 60px;
    flex: none;
    border-top: 1px solid #3d3d3d;
    background: #1c1c1c;
    color: #fff;
    font-size: 15px;
    line-height: 20px;
}

.widget {
    display: flex;
    align-items: center;
    gap: 2px;
    padding: 0 0 4px 26px;
    font-size: 14px;
}

.dim {
    color: #cfcfcf;
}

.apps {
    display: flex;
    align-items: center;
    margin-right: 64px;
}

.start {
    width: 62px;
    height: 48px;
}

.search {
    display: flex;
    align-items: center;
    gap: 12px;
    width: 275px;
    height: 40px;
    margin-right: 5px;
    padding: 0 12px 0 14px;
    border: 1px solid #555;
    border-radius: 20px;
    background: #3a3a3a;
}

.search input {
    flex: 1;
    min-width: 0;
    padding: 0;
    border: none;
    background: none;
    color: #fff;
    font: inherit;
    font-size: 16px;
    outline: none;
}

.search input::placeholder {
    color: #d2d2d2;
}

.app {
    position: relative;
    width: 49px;
    height: 49px;
    margin: 0 3px;
    border-radius: 6px;
}

.app.current {
    border: 1px solid #363636;
    background: #2b2b2b;
}

.app-icon {
    width: 30px;
    height: 30px;
}

.app-face {
    position: absolute;
    top: 3px;
    right: 2px;
}

.count {
    position: absolute;
    top: 3px;
    right: 3px;
    width: 20px;
    border-radius: 50%;
    background: #26f0f5;
    color: #111;
    font-size: 14px;
}

.running {
    position: absolute;
    bottom: 0;
    left: 50%;
    width: 8px;
    height: 4px;
    margin-left: -4px;
    border-radius: 2px;
    background: #9a9a9a;
}

.current .running {
    width: 20px;
    margin-left: -10px;
    background: #26f0f5;
}

.tray {
    display: flex;
    align-items: center;
    justify-content: flex-end;
    padding: 0 24px 2px 0;
}

.lang {
    margin: 0 31px 0 27px;
    text-align: center;
}

.status {
    display: flex;
    align-items: center;
    gap: 9px;
    margin-right: 18px;
}

.clock {
    margin-right: 9px;
    text-align: right;
}
</style>
